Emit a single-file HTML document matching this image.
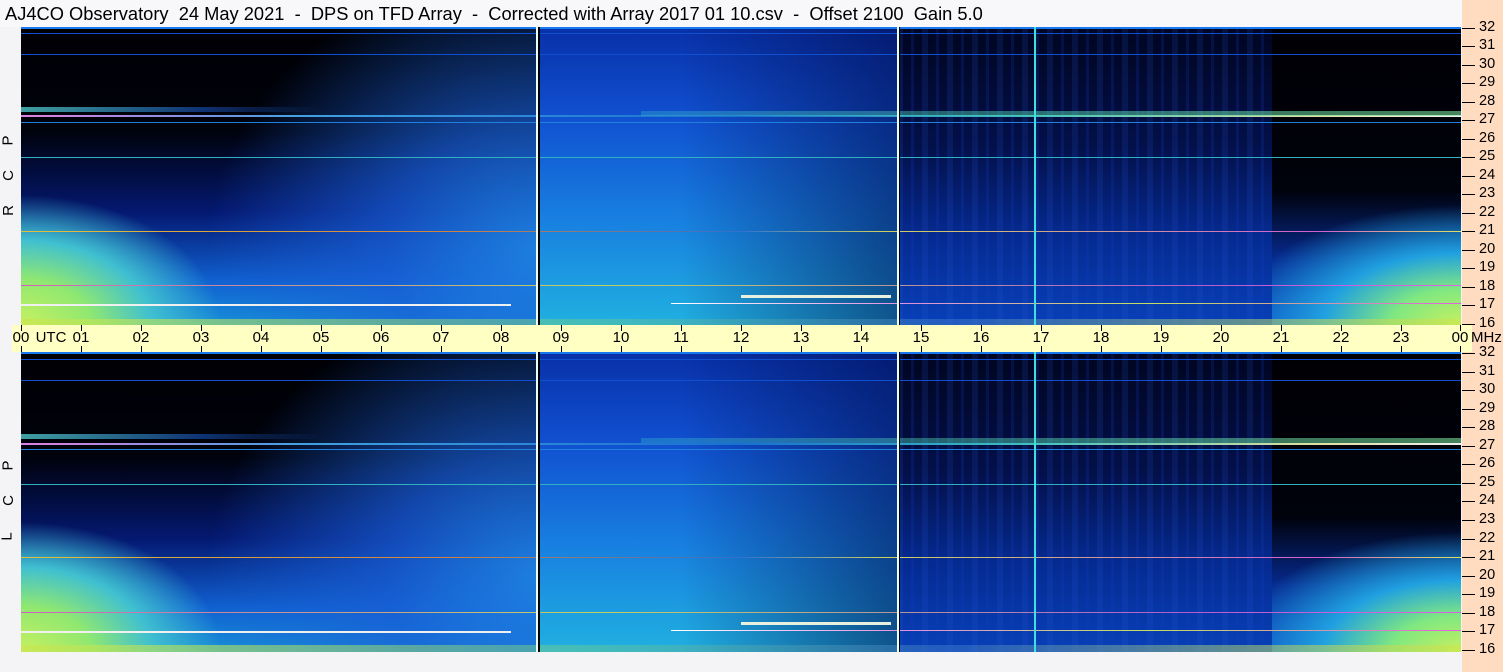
<!DOCTYPE html>
<html><head><meta charset="utf-8"><style>
*{margin:0;padding:0;box-sizing:border-box}
body{width:1503px;height:672px;overflow:hidden;background:#f4f4f6;position:relative;font-family:"Liberation Sans",sans-serif}
.title{position:absolute;left:5px;top:3px;font-size:18.3px;color:#000;white-space:pre;letter-spacing:0}
.topbar{position:absolute;left:0;top:0;width:1462px;height:27px;background:#f8f8fa}
.right{position:absolute;left:1462px;top:0;width:41px;height:672px;background:#ffdcc0}
.band{position:absolute;left:12px;top:325px;width:1460px;height:27px;background:#ffffc4}
.pn{position:absolute;left:21px;width:1440px;overflow:hidden;background:#000}
.pn div{position:absolute}
.a{left:0;top:0;width:516px;height:100%;background:
 radial-gradient(ellipse 200px 130px at 0% 100%,#c8f060 0%,#90e870 35%,#40c0d0 65%,rgba(30,120,230,0) 100%),
 radial-gradient(ellipse 330px 280px at 100% 75%,rgba(30,130,225,.95) 0%,rgba(25,95,215,.7) 45%,rgba(0,0,0,0) 100%),
 linear-gradient(to bottom,#000004 0%,#00020c 35%,#041870 62%,#1060d0 85%,#1890d8 100%)}
.b{left:516px;top:0;width:360px;height:100%;background:
 linear-gradient(to right,rgba(0,0,0,0) 40%,rgba(0,10,70,.55) 100%),
 linear-gradient(to bottom,#0830a8 0%,#1050d0 30%,#1880e0 65%,#20b0e0 100%)}
.c{left:876px;top:0;width:375px;height:100%;background:
 repeating-linear-gradient(to right,rgba(40,90,220,.15) 0 6px,rgba(0,0,0,0) 6px 14px,rgba(20,60,200,.2) 14px 17px,rgba(0,0,0,0) 17px 25px),
 linear-gradient(to bottom,#000520 0%,#03104a 40%,#052a90 70%,#0840b8 100%)}
.d{left:1251px;top:0;width:189px;height:100%;background:
 radial-gradient(ellipse 230px 120px at 100% 100%,#c8f060 0%,#80e880 30%,#20a0e0 60%,rgba(10,60,200,0) 100%),
 linear-gradient(to bottom,#000004 0%,#00020c 55%,#062a90 78%,#0c50c8 100%)}
.h{height:1px}
.vw{top:0;height:100%;width:2px;background:#e8ffff}
.vk{top:0;height:100%;width:2px;background:#000}
.vc{top:0;height:100%;width:2px;background:#40e0e0}
.tk{position:absolute;left:1462px;width:13px;height:1px;background:#000}
.tl{position:absolute;left:1479px;font-size:14.5px;line-height:15px;color:#000}
.ht{position:absolute;top:325px;width:1px;height:6px;background:#000}
.ht2{position:absolute;top:346px;width:1px;height:6px;background:#000}
.hl{position:absolute;top:329px;font-size:15px;color:#000;transform:translateX(-50%)}
.lab{position:absolute;left:3px;font-size:15px;transform:rotate(-90deg);color:#000}
</style></head><body>
<div class="topbar"></div>
<div class="title">AJ4CO Observatory  24 May 2021  -  DPS on TFD Array  -  Corrected with Array 2017 01 10.csv  -  Offset 2100  Gain 5.0</div>
<div class="right"></div>

<div class="pn" style="top:27px;height:298px">
<div class="a"></div><div class="b"></div><div class="c"></div><div class="d"></div>
<div class="h" style="left:0;top:0;width:1440px;height:2px;background:#1878f0"></div>
<div class="h" style="left:0;top:6px;width:1440px;background:#1050d0"></div>
<div class="h" style="left:0;top:27px;width:1440px;background:#1050d0"></div>
<div class="h" style="left:0;top:80px;width:300px;height:5px;background:linear-gradient(to right,rgba(80,200,200,.8),rgba(30,100,220,.5) 60%,rgba(0,0,0,0))"></div>
<div class="h" style="left:0;top:88px;width:1440px;height:2px;background:linear-gradient(to right,#e080e0,#40a0e0 20%,#1870d0 50%,#40c0c0 70%,#e0e0a0 90%,#f0f0f0)"></div>
<div class="h" style="left:620px;top:84px;width:820px;height:5px;background:linear-gradient(to right,rgba(60,200,200,.3),rgba(80,210,170,.5) 50%,rgba(120,220,150,.6))"></div>
<div class="h" style="left:0;top:95px;width:1440px;background:#2080e0"></div>
<div class="h" style="left:0;top:130px;width:1440px;background:#30b0c0"></div>
<div class="h" style="left:0;top:204px;width:1440px;background:linear-gradient(to right,#e0c040,#d08040 30%,#3070d0 50%,#d0d060 60%,#d060d0 90%,#e0e060)"></div>
<div class="h" style="left:0;top:258px;width:1440px;background:linear-gradient(to right,#d060c0,#c0d060 40%,#b060d0 80%,#e060e0)"></div>
<div class="h" style="left:0;top:277px;width:490px;height:2px;background:#f0f0f0"></div>
<div class="h" style="left:650px;top:276px;width:790px;background:linear-gradient(to right,#ffffff,#e090e0 30%,#c0e060 60%,#e060e0)"></div>
<div class="h" style="left:720px;top:268px;width:150px;height:3px;background:#e8f0e0"></div>
<div class="h" style="left:0;top:292px;width:1440px;height:6px;background:linear-gradient(to right,rgba(200,230,80,.7),rgba(100,200,150,.5) 40%,rgba(60,120,200,.5) 65%,rgba(200,230,80,.7))"></div>
<div class="vw" style="left:515px"></div><div class="vk" style="left:517px"></div>
<div class="vw" style="left:876px"></div><div class="vk" style="left:878px;width:1px"></div>
<div class="vc" style="left:1013px"></div>
</div>

<div class="pn" style="top:352px;height:300px">
<div class="a"></div><div class="b"></div><div class="c"></div><div class="d"></div>
<div class="h" style="left:0;top:0;width:1440px;height:2px;background:#1878f0"></div>
<div class="h" style="left:0;top:7px;width:1440px;background:#1050d0"></div>
<div class="h" style="left:0;top:28px;width:1440px;background:#1050d0"></div>
<div class="h" style="left:0;top:82px;width:300px;height:5px;background:linear-gradient(to right,rgba(80,200,200,.8),rgba(30,100,220,.5) 60%,rgba(0,0,0,0))"></div>
<div class="h" style="left:0;top:91px;width:1440px;height:2px;background:linear-gradient(to right,#e080e0,#40a0e0 20%,#1870d0 50%,#40c0c0 70%,#e0e0a0 90%,#f0f0f0)"></div>
<div class="h" style="left:620px;top:86px;width:820px;height:5px;background:linear-gradient(to right,rgba(60,200,200,.3),rgba(80,210,170,.5) 50%,rgba(120,220,150,.6))"></div>
<div class="h" style="left:0;top:97px;width:1440px;background:#2080e0"></div>
<div class="h" style="left:0;top:132px;width:1440px;background:#30b0c0"></div>
<div class="h" style="left:0;top:205px;width:1440px;background:linear-gradient(to right,#e0c040,#d08040 30%,#3070d0 50%,#d0d060 60%,#d060d0 90%,#e0e060)"></div>
<div class="h" style="left:0;top:260px;width:1440px;background:linear-gradient(to right,#d060c0,#c0d060 40%,#b060d0 80%,#e060e0)"></div>
<div class="h" style="left:0;top:279px;width:490px;height:2px;background:#f0f0f0"></div>
<div class="h" style="left:650px;top:278px;width:790px;background:linear-gradient(to right,#ffffff,#e090e0 30%,#c0e060 60%,#e060e0)"></div>
<div class="h" style="left:720px;top:270px;width:150px;height:3px;background:#e8f0e0"></div>
<div class="h" style="left:0;top:293px;width:1440px;height:7px;background:linear-gradient(to right,rgba(200,230,80,.7),rgba(100,200,150,.5) 40%,rgba(60,120,200,.5) 65%,rgba(200,230,80,.7))"></div>
<div class="vw" style="left:515px"></div><div class="vk" style="left:517px"></div>
<div class="vw" style="left:876px"></div><div class="vk" style="left:878px;width:1px"></div>
<div class="vc" style="left:1013px"></div>
</div>

<div class="band"></div>
<div class="hl" style="left:21px">00</div><div class="hl" style="left:51px">UTC</div>
<div class="hl" style="left:81px">01</div><div class="hl" style="left:141px">02</div><div class="hl" style="left:201px">03</div><div class="hl" style="left:261px">04</div><div class="hl" style="left:321px">05</div><div class="hl" style="left:381px">06</div><div class="hl" style="left:441px">07</div><div class="hl" style="left:501px">08</div><div class="hl" style="left:561px">09</div><div class="hl" style="left:621px">10</div><div class="hl" style="left:681px">11</div><div class="hl" style="left:741px">12</div><div class="hl" style="left:801px">13</div><div class="hl" style="left:861px">14</div><div class="hl" style="left:921px">15</div><div class="hl" style="left:981px">16</div><div class="hl" style="left:1041px">17</div><div class="hl" style="left:1101px">18</div><div class="hl" style="left:1161px">19</div><div class="hl" style="left:1221px">20</div><div class="hl" style="left:1281px">21</div><div class="hl" style="left:1341px">22</div><div class="hl" style="left:1401px">23</div><div class="hl" style="left:1460px">00</div>
<div style="position:absolute;left:1471px;top:329px;font-size:15px">MHz</div>

<div class="lab" style="top:132px">P</div>
<div class="lab" style="top:167px">C</div>
<div class="lab" style="top:202px">R</div>
<div class="lab" style="top:457px">P</div>
<div class="lab" style="top:492px">C</div>
<div class="lab" style="top:528px">L</div>

<div class="ht" style="left:21px"></div><div class="ht" style="left:81px"></div><div class="ht" style="left:141px"></div><div class="ht" style="left:201px"></div><div class="ht" style="left:261px"></div><div class="ht" style="left:321px"></div><div class="ht" style="left:381px"></div><div class="ht" style="left:441px"></div><div class="ht" style="left:501px"></div><div class="ht" style="left:561px"></div><div class="ht" style="left:621px"></div><div class="ht" style="left:681px"></div><div class="ht" style="left:741px"></div><div class="ht" style="left:801px"></div><div class="ht" style="left:861px"></div><div class="ht" style="left:921px"></div><div class="ht" style="left:981px"></div><div class="ht" style="left:1041px"></div><div class="ht" style="left:1101px"></div><div class="ht" style="left:1161px"></div><div class="ht" style="left:1221px"></div><div class="ht" style="left:1281px"></div><div class="ht" style="left:1341px"></div><div class="ht" style="left:1401px"></div><div class="ht" style="left:1460px"></div>
<div class="ht2" style="left:21px"></div><div class="ht2" style="left:81px"></div><div class="ht2" style="left:141px"></div><div class="ht2" style="left:201px"></div><div class="ht2" style="left:261px"></div><div class="ht2" style="left:321px"></div><div class="ht2" style="left:381px"></div><div class="ht2" style="left:441px"></div><div class="ht2" style="left:501px"></div><div class="ht2" style="left:561px"></div><div class="ht2" style="left:621px"></div><div class="ht2" style="left:681px"></div><div class="ht2" style="left:741px"></div><div class="ht2" style="left:801px"></div><div class="ht2" style="left:861px"></div><div class="ht2" style="left:921px"></div><div class="ht2" style="left:981px"></div><div class="ht2" style="left:1041px"></div><div class="ht2" style="left:1101px"></div><div class="ht2" style="left:1161px"></div><div class="ht2" style="left:1221px"></div><div class="ht2" style="left:1281px"></div><div class="ht2" style="left:1341px"></div><div class="ht2" style="left:1401px"></div><div class="ht2" style="left:1460px"></div>

<div class="tk" style="top:28px"></div><div class="tl" style="top:20px">32</div>
<div class="tk" style="top:46px"></div><div class="tl" style="top:38px">31</div>
<div class="tk" style="top:65px"></div><div class="tl" style="top:57px">30</div>
<div class="tk" style="top:83px"></div><div class="tl" style="top:75px">29</div>
<div class="tk" style="top:102px"></div><div class="tl" style="top:94px">28</div>
<div class="tk" style="top:120px"></div><div class="tl" style="top:112px">27</div>
<div class="tk" style="top:139px"></div><div class="tl" style="top:131px">26</div>
<div class="tk" style="top:157px"></div><div class="tl" style="top:149px">25</div>
<div class="tk" style="top:176px"></div><div class="tl" style="top:168px">24</div>
<div class="tk" style="top:194px"></div><div class="tl" style="top:186px">23</div>
<div class="tk" style="top:213px"></div><div class="tl" style="top:205px">22</div>
<div class="tk" style="top:231px"></div><div class="tl" style="top:223px">21</div>
<div class="tk" style="top:250px"></div><div class="tl" style="top:242px">20</div>
<div class="tk" style="top:268px"></div><div class="tl" style="top:260px">19</div>
<div class="tk" style="top:287px"></div><div class="tl" style="top:279px">18</div>
<div class="tk" style="top:305px"></div><div class="tl" style="top:297px">17</div>
<div class="tk" style="top:324px"></div><div class="tl" style="top:316px">16</div>
<div class="tk" style="top:353px"></div><div class="tl" style="top:345px">32</div>
<div class="tk" style="top:372px"></div><div class="tl" style="top:364px">31</div>
<div class="tk" style="top:390px"></div><div class="tl" style="top:382px">30</div>
<div class="tk" style="top:409px"></div><div class="tl" style="top:401px">29</div>
<div class="tk" style="top:427px"></div><div class="tl" style="top:419px">28</div>
<div class="tk" style="top:446px"></div><div class="tl" style="top:438px">27</div>
<div class="tk" style="top:464px"></div><div class="tl" style="top:456px">26</div>
<div class="tk" style="top:483px"></div><div class="tl" style="top:475px">25</div>
<div class="tk" style="top:501px"></div><div class="tl" style="top:493px">24</div>
<div class="tk" style="top:520px"></div><div class="tl" style="top:512px">23</div>
<div class="tk" style="top:539px"></div><div class="tl" style="top:531px">22</div>
<div class="tk" style="top:557px"></div><div class="tl" style="top:549px">21</div>
<div class="tk" style="top:576px"></div><div class="tl" style="top:568px">20</div>
<div class="tk" style="top:594px"></div><div class="tl" style="top:586px">19</div>
<div class="tk" style="top:613px"></div><div class="tl" style="top:605px">18</div>
<div class="tk" style="top:631px"></div><div class="tl" style="top:623px">17</div>
<div class="tk" style="top:650px"></div><div class="tl" style="top:642px">16</div>
</body></html>
